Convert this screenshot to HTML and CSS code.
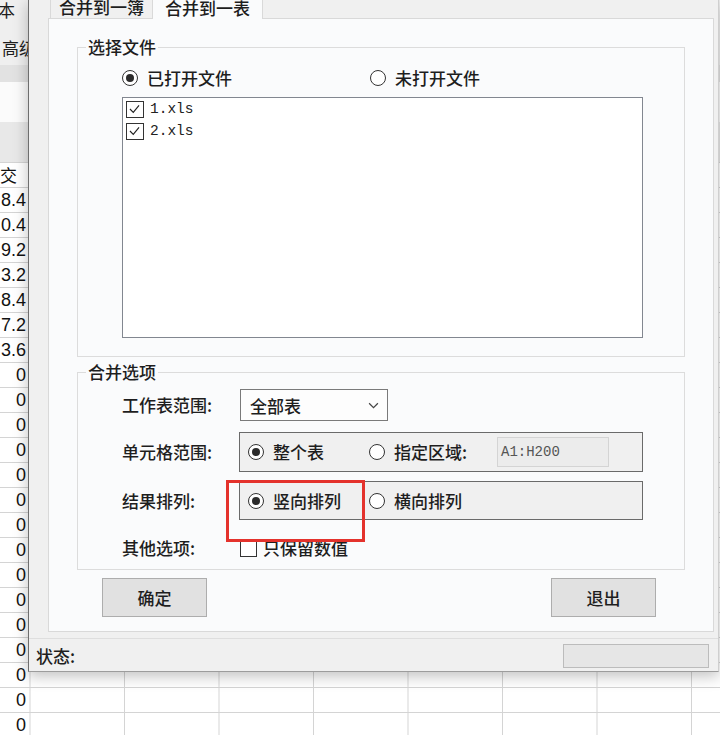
FILE: index.html
```html
<!DOCTYPE html>
<html lang="zh-CN">
  <head>
    <meta charset="utf-8">
    <meta name="viewport" content="width=device-width, initial-scale=1">
    <title>合并工作表</title>
    <link rel="stylesheet" href="styles.css">
  </head>
  <body>
    <div class="sheet">
      <div class="ribbon">
        <span class="ribbon-tab">文本</span>
        <span class="ribbon-btn">高级</span>
      </div>
      <div class="ribbon-foot"></div>
      <div class="formula-bar"></div>
      <div class="col-head"></div>
      <div class="grid">
        <div class="col-a">
          <div class="cell head">交</div>
          <div class="cell">8.4</div>
          <div class="cell">0.4</div>
          <div class="cell">9.2</div>
          <div class="cell">3.2</div>
          <div class="cell">8.4</div>
          <div class="cell">7.2</div>
          <div class="cell">3.6</div>
          <div class="cell">0</div>
          <div class="cell">0</div>
          <div class="cell">0</div>
          <div class="cell">0</div>
          <div class="cell">0</div>
          <div class="cell">0</div>
          <div class="cell">0</div>
          <div class="cell">0</div>
          <div class="cell">0</div>
          <div class="cell">0</div>
          <div class="cell">0</div>
          <div class="cell">0</div>
          <div class="cell">0</div>
          <div class="cell">0</div>
          <div class="cell">0</div>
        </div>
        <div class="cells"></div>
      </div>
    </div>

    <div class="dialog">
      <div class="tabs">
        <div class="tab">合并到一簿</div>
        <div class="tab active">合并到一表</div>
      </div>

      <div class="panel">
        <fieldset class="group files">
          <legend>选择文件</legend>
          <div class="radio-row">
            <label class="radio wide checked"><span class="dot"></span>已打开文件</label>
            <label class="radio"><span class="dot"></span>未打开文件</label>
          </div>
          <ul class="file-list">
            <li><span class="check"><svg viewBox="0 0 17 17"><polyline points="3,8.5 7,12.5 14,4"/></svg></span>1.xls</li>
            <li><span class="check"><svg viewBox="0 0 17 17"><polyline points="3,8.5 7,12.5 14,4"/></svg></span>2.xls</li>
          </ul>
        </fieldset>

        <fieldset class="group options">
          <legend>合并选项</legend>
          <div class="opt-row first">
            <span class="opt-label">工作表范围:</span>
            <div class="select">
              <span>全部表</span>
              <svg viewBox="0 0 10 6"><polyline points="1,1 5,5 9,1"/></svg>
            </div>
          </div>
          <div class="opt-row">
            <span class="opt-label">单元格范围:</span>
            <div class="choice-box tall">
              <label class="radio col1 checked"><span class="dot"></span>整个表</label>
              <label class="radio col2"><span class="dot"></span>指定区域:</label>
              <span class="range">A1:H200</span>
            </div>
          </div>
          <div class="opt-row marked">
            <span class="opt-label">结果排列:</span>
            <div class="choice-box">
              <label class="radio col1 checked"><span class="dot"></span>竖向排列</label>
              <label class="radio col2"><span class="dot"></span>横向排列</label>
            </div>
            <div class="highlight"></div>
          </div>
          <div class="opt-row last">
            <span class="opt-label">其他选项:</span>
            <label class="checkbox"><span class="box"></span>只保留数值</label>
          </div>
        </fieldset>

        <div class="actions">
          <button class="btn">确定</button>
          <button class="btn">退出</button>
        </div>
      </div>

      <div class="status">
        <span>状态:</span>
        <div class="progress"></div>
      </div>
    </div>
  </body>
</html>
```

FILE: styles.css
```css
html, body {
  margin: 0;
  padding: 0;
}
body {
  position: relative;
  width: 720px;
  height: 735px;
  overflow: hidden;
  background: #fff;
  font-family: "Noto Sans CJK SC", "Microsoft YaHei", sans-serif;
  font-size: 17px;
  color: #1e1e1e;
}

/* spreadsheet behind the dialog */
.ribbon {
  display: flex;
  flex-direction: column;
  align-items: flex-start;
  height: 65px;
  background: #efefef;
}
.ribbon-tab {
  margin-left: -19px;
  line-height: 20px;
}
.ribbon-btn {
  margin: 18px 0 0 2px;
  line-height: 20px;
}
.ribbon-foot {
  height: 17px;
  background: #e2e2e2;
}
.formula-bar {
  height: 40px;
  background: #fbfbfb;
}
.col-head {
  height: 40px;
  background: #e8e8e8;
}
.grid {
  display: flex;
  height: 573px;
}
.col-a {
  width: 28px;
  flex: none;
}
.cell {
  box-sizing: border-box;
  height: 25px;
  border-top: 1px solid #d4d4d4;
  padding-right: 2px;
  overflow: hidden;
  white-space: nowrap;
  text-align: right;
  font-family: "Liberation Sans", Arial, sans-serif;
  font-size: 18px;
  line-height: 24px;
  color: #111;
}
.cell.head {
  text-align: left;
  padding: 0;
  font-family: "Noto Sans CJK SC", sans-serif;
  font-size: 17px;
}
.cells {
  flex: 1;
  background-color: #fff;
  background-image:
    linear-gradient(90deg, #d4d4d4 1px, transparent 1px),
    linear-gradient(#d4d4d4 1px, transparent 1px);
  background-size: 94.5px 25px;
  background-position: 1.5px 0, 0 0;
}

/* dialog window */
.dialog {
  position: absolute;
  left: 28px;
  top: 0;
  box-sizing: border-box;
  width: 691px;
  height: 672px;
  display: flex;
  flex-direction: column;
  background: #f0f0f0;
  border-left: 1px solid #6e6e6e;
  border-right: 1px solid #cfcfcf;
  border-bottom: 1px solid #9c9c9c;
  box-shadow: 0 4px 14px rgba(0, 0, 0, 0.25);
  font-weight: 500;
}
.tabs {
  display: flex;
  align-items: flex-end;
  height: 18px;
  padding-left: 21px;
  flex: none;
}
.tab {
  box-sizing: border-box;
  width: 103px;
  height: 30px;
  padding-top: 6px;
  line-height: 24px;
  text-align: center;
  background: #f0f0f0;
  border: 1px solid #d9d9d9;
  border-bottom: none;
}
.tab.active {
  position: relative;
  z-index: 1;
  width: 110px;
  margin-bottom: -1px;
  background: #fafbfc;
  border-left: none;
}
.panel {
  box-sizing: border-box;
  height: 614px;
  margin: 0 4px 0 19px;
  background: #fafbfc;
  border: 1px solid #d9d9d9;
  flex: none;
}

/* group boxes */
.group {
  margin: 0 28px;
  padding: 0 0 0 8px;
  border: 1px solid #dcdcdc;
  min-width: 0;
}
.group legend {
  padding: 0 2px;
  line-height: 20px;
}
.files {
  margin-top: 18px;
  padding-bottom: 18px;
}
.options {
  margin-top: 5px;
  padding-bottom: 11px;
}

.radio {
  display: inline-flex;
  align-items: center;
  line-height: 20px;
}
.radio .dot {
  box-sizing: border-box;
  display: inline-flex;
  align-items: center;
  justify-content: center;
  width: 16px;
  height: 16px;
  margin-right: 9px;
  border: 1.5px solid #333;
  border-radius: 50%;
  background: #fff;
}
.radio.checked .dot::after {
  content: "";
  width: 8px;
  height: 8px;
  border-radius: 50%;
  background: #2b2b2b;
}
.radio-row {
  display: flex;
  height: 20px;
  margin: 11px 0 0 36px;
}
.radio.wide {
  width: 248px;
}

.file-list {
  box-sizing: border-box;
  width: 521px;
  height: 241px;
  margin: 9px 0 0 36px;
  padding: 0;
  list-style: none;
  background: #fff;
  border: 1px solid #828790;
}
.file-list li {
  display: flex;
  align-items: center;
  height: 22px;
  padding-left: 3px;
  font-family: "Liberation Mono", "Courier New", monospace;
  font-size: 14.5px;
  font-weight: 400;
  color: #222;
}
.check {
  box-sizing: border-box;
  width: 18px;
  height: 17px;
  margin-right: 6px;
  border: 1.5px solid #333;
  background: #fff;
}
.check svg {
  display: block;
  width: 15px;
  height: 14px;
  fill: none;
  stroke: #222;
  stroke-width: 1.4;
}

/* options */
.opt-row {
  display: flex;
  align-items: center;
  margin: 11px 0 0 36px;
}
.opt-row.first {
  margin-top: 7px;
}
.opt-row.marked {
  position: relative;
  margin-top: 9px;
}
.opt-row.last {
  margin-top: 18px;
  height: 20px;
}
.opt-label {
  width: 117px;
  flex: none;
  line-height: 20px;
}
.select {
  box-sizing: border-box;
  display: flex;
  align-items: center;
  justify-content: space-between;
  width: 148px;
  height: 32px;
  margin-left: 1px;
  padding: 0 8px 0 9px;
  background: #fdfdfd;
  border: 1px solid #7a7a7a;
}
.select svg {
  width: 11px;
  height: 7px;
  fill: none;
  stroke: #444;
  stroke-width: 1.1;
}
.choice-box {
  box-sizing: border-box;
  display: flex;
  align-items: center;
  width: 404px;
  height: 39px;
  padding-left: 8px;
  background: #f0f0f0;
  border: 1px solid #6a6a6a;
}
.choice-box.tall {
  height: 40px;
}
.radio.col1 {
  width: 121px;
}
.radio.col2 {
  width: 128px;
}
.range {
  box-sizing: border-box;
  width: 112px;
  height: 30px;
  padding-left: 3px;
  line-height: 28px;
  font-family: "Liberation Mono", "Courier New", monospace;
  font-size: 14px;
  font-weight: 400;
  color: #555;
  background: #ececec;
  border: 1px solid #d4d4d4;
}
.highlight {
  position: absolute;
  left: 104px;
  top: -1px;
  box-sizing: border-box;
  width: 139px;
  height: 62px;
  border: 3px solid #e4322c;
}
.checkbox {
  display: inline-flex;
  align-items: center;
  margin-left: 1px;
  line-height: 20px;
}
.checkbox .box {
  box-sizing: border-box;
  width: 17px;
  height: 17px;
  margin-right: 6px;
  border: 1.5px solid #333;
  background: #fff;
}

/* buttons */
.actions {
  display: flex;
  justify-content: space-between;
  margin-top: 8px;
  padding: 0 57px 0 53px;
}
.btn {
  box-sizing: border-box;
  width: 105px;
  height: 39px;
  padding: 0;
  font-family: inherit;
  font-size: 17px;
  font-weight: 500;
  color: #1e1e1e;
  background: #e1e1e1;
  border: 1px solid #adadad;
  border-radius: 0;
}

/* status bar */
.status {
  display: flex;
  align-items: center;
  flex: 1;
  margin-top: 6px;
  padding: 2px 9px 0 7px;
  border-top: 1px solid #dedede;
  line-height: 20px;
}
.progress {
  box-sizing: border-box;
  width: 146px;
  height: 24px;
  margin-left: auto;
  background: #e6e6e6;
  border: 1px solid #bcbcbc;
}
```
